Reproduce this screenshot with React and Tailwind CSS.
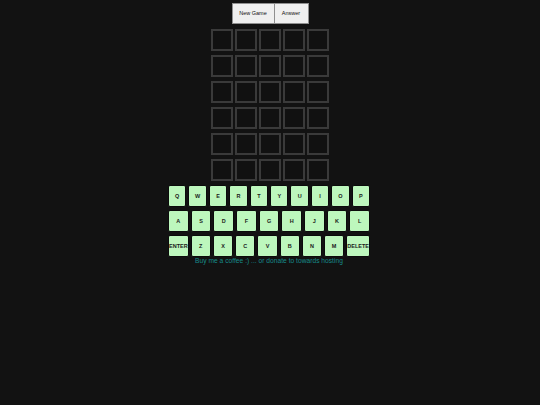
import React from 'react';

const ROWS = [
  ['Q', 'W', 'E', 'R', 'T', 'Y', 'U', 'I', 'O', 'P'],
  ['A', 'S', 'D', 'F', 'G', 'H', 'J', 'K', 'L'],
  ['ENTER', 'Z', 'X', 'C', 'V', 'B', 'N', 'M', 'DELETE'],
];

const Board = () => (
  <div className="flex flex-col gap-[4px] mt-[5px]">
    {Array.from({ length: 6 }).map((_, r) => (
      <div key={r} className="flex gap-[2px]">
        {Array.from({ length: 5 }).map((_, c) => (
          <div key={c} className="w-[22px] h-[22px] border-2 border-[#3a3a3a] bg-[#111111]" />
        ))}
      </div>
    ))}
  </div>
);

const Keyboard = () => (
  <div className="flex flex-col gap-[3px] w-[202px] mt-[4px] -ml-[2px]">
    {ROWS.map((row, i) => (
      <div key={i} className="flex gap-[2px]">
        {row.map((k) => (
          <button
            key={k}
            className="flex-1 h-[22px] rounded-[2px] border border-[#0b0b0b] bg-[#bdf7bd] text-[5.5px] font-bold text-[#1a1a1a] flex items-center justify-center p-0"
          >
            {k}
          </button>
        ))}
      </div>
    ))}
  </div>
);

export default function App() {
  return (
    <div className="w-[540px] h-[405px] bg-[#121212] flex flex-col items-center pt-[3px] font-['Liberation_Sans',Arial,sans-serif]">
      <div className="flex">
        <button className="w-[43px] h-[21px] bg-[#efefef] border border-[#8f8f8f] text-[5.5px] text-[#111]">New Game</button>
        <button className="w-[34px] h-[21px] bg-[#efefef] border border-l-0 border-[#8f8f8f] text-[5.5px] text-[#111]">Answer</button>
      </div>
      <Board />
      <Keyboard />
      <a className="mt-[1px] text-[6.7px] text-[#178a8a] leading-none -ml-[2px]">
        Buy me a coffee :) ... or donate to towards hosting
      </a>
    </div>
  );
}
